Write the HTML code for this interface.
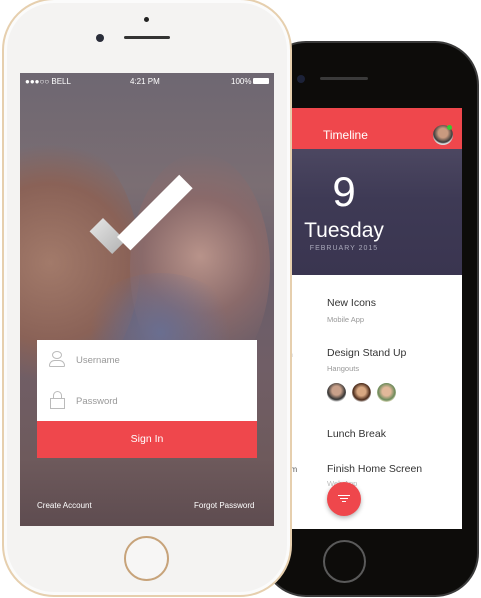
<!DOCTYPE html>
<html><head><style>
*{margin:0;padding:0;box-sizing:border-box}
body{width:481px;height:598px;background:#fff;position:relative;overflow:hidden;font-family:"Liberation Sans",sans-serif}
.abs{position:absolute}
</style></head><body>
<!-- black phone -->
<div class="abs" style="left:262px;top:41px;width:217px;height:556px;background:#0d0c0a;border-radius:44px;border:2px solid #3a3a3a"></div>
<div class="abs" style="left:297px;top:75px;width:8px;height:8px;border-radius:50%;background:#1c2238"></div>
<div class="abs" style="left:320px;top:77px;width:48px;height:3px;border-radius:2px;background:#3a3a3a"></div>
<div class="abs" style="left:323px;top:540px;width:43px;height:43px;border-radius:50%;border:2px solid #5a5a5a"></div>
<div class="abs" style="left:280px;top:108px;width:182px;height:421px;background:#fff;overflow:hidden">
  <div class="abs" style="left:0;top:0;width:182px;height:41px;background:#ef474c;color:#fff;font-size:12px">
    <span class="abs" style="left:43px;top:20px">Timeline</span>
    <div class="abs" style="left:153px;top:17px;width:20px;height:20px;border-radius:50%;background:radial-gradient(circle at 50% 40%,#c99a7f 30%,#3a3a3a 60%,#ddd 70%)"></div>
    <div class="abs" style="left:167px;top:17px;width:5px;height:5px;border-radius:50%;background:#3c3"></div>
  </div>
  <div class="abs" style="left:0;top:41px;width:182px;height:126px;background:linear-gradient(180deg,#4c4761 0%,#3e3a55 40%,#3a3550 100%);color:#fff;text-align:center">
    <div class="abs" style="left:0;width:128px;top:22px;font-size:42px;font-weight:300;line-height:42px">9</div>
    <div class="abs" style="left:0;width:128px;top:70px;font-size:21px;line-height:24px">Tuesday</div>
    <div class="abs" style="left:0;width:128px;top:96px;font-size:7px;letter-spacing:1px;color:#aaa9bb">FEBRUARY 2015</div>
  </div>
  <div class="abs" style="left:47px;top:189px;font-size:10.5px;color:#333">New Icons</div>
  <div class="abs" style="left:47px;top:207px;font-size:7.5px;color:#999">Mobile App</div>
  <div class="abs" style="left:47px;top:239px;font-size:10.5px;color:#333">Design Stand Up</div>
  <div class="abs" style="left:47px;top:256px;font-size:7.5px;color:#999">Hangouts</div>
  <div class="abs" style="left:47px;top:275px;width:19px;height:19px;border-radius:50%;background:radial-gradient(circle at 50% 40%,#c8a08a 30%,#333 60%,#eee 75%)"></div>
  <div class="abs" style="left:72px;top:275px;width:19px;height:19px;border-radius:50%;background:radial-gradient(circle at 50% 45%,#d8a882 30%,#4a2a1a 60%,#eee 75%)"></div>
  <div class="abs" style="left:97px;top:275px;width:19px;height:19px;border-radius:50%;background:radial-gradient(circle at 50% 45%,#e2b89a 30%,#6b8a5a 60%,#efe8cc 75%)"></div>
  <div class="abs" style="left:47px;top:320px;font-size:10.5px;color:#333">Lunch Break</div>
  <div class="abs" style="left:47px;top:355px;font-size:10.5px;color:#333">Finish Home Screen</div>
  <div class="abs" style="left:47px;top:371px;font-size:7.5px;color:#bbb">Web App</div>
  <div class="abs" style="left:6px;top:242px;font-size:8px;color:#555">m</div>
  <div class="abs" style="left:6px;top:357px;font-size:8px;color:#555">am</div>
  <div class="abs" style="left:47px;top:374px;width:34px;height:34px;border-radius:50%;background:#ef474c;box-shadow:0 2px 5px rgba(0,0,0,.3)">
    <div class="abs" style="left:11px;top:13px;width:12px;height:1px;background:#fff"></div>
    <div class="abs" style="left:13px;top:16px;width:8px;height:1px;background:#fff"></div>
    <div class="abs" style="left:15px;top:19px;width:4px;height:1px;background:#fff"></div>
  </div>
</div>
<!-- white phone -->
<div class="abs" style="left:2px;top:-2px;width:290px;height:599px;background:#f4f3f2;border-radius:52px;border:2px solid #e6cfae;box-shadow:inset 0 0 0 3px #fbfbfb"></div>
<div class="abs" style="left:144px;top:17px;width:5px;height:5px;border-radius:50%;background:#222"></div>
<div class="abs" style="left:96px;top:34px;width:8px;height:8px;border-radius:50%;background:#2a2d3a"></div>
<div class="abs" style="left:124px;top:36px;width:46px;height:3px;border-radius:2px;background:#333"></div>
<div class="abs" style="left:124px;top:536px;width:45px;height:45px;border-radius:50%;border:2px solid #c7a37a;background:#f7f6f5"></div>
<div class="abs" style="left:20px;top:73px;width:254px;height:453px;overflow:hidden;background:linear-gradient(180deg,#6e6772 0%,#7b6e73 25%,#6a5e6a 45%,#705e66 65%,#6e5a5c 85%,#5e4c50 100%)">
  <div class="abs" style="left:-60px;top:60px;width:180px;height:260px;border-radius:50%;background:radial-gradient(circle,#a27a6a 0%,#8a6257 50%,rgba(120,90,85,0) 75%)"></div>
  <div class="abs" style="left:110px;top:80px;width:140px;height:230px;border-radius:50%;background:radial-gradient(circle at 50% 45%,#b8938a 0%,#8a6a6a 40%,rgba(90,70,80,0) 72%)"></div>
  <div class="abs" style="left:60px;top:200px;width:160px;height:120px;border-radius:50%;background:radial-gradient(circle,#6a6e90 0%,rgba(90,90,120,0) 70%)"></div>
  <div class="abs" style="left:0;top:0;width:254px;height:14px;color:#fff;font-size:8px">
    <span class="abs" style="left:5px;top:4px">●●●○○ BELL</span>
    <span class="abs" style="left:110px;top:4px">4:21 PM</span>
    <span class="abs" style="left:211px;top:4px">100%</span>
    <div class="abs" style="left:233px;top:5px;width:16px;height:6px;background:#fff;border-radius:1px"></div>
  </div>
  <div class="abs" style="left:83px;top:145px;width:32px;height:19px;background:linear-gradient(90deg,#ddd,#bbb);transform:rotate(45deg);transform-origin:0 0"></div>
  <div class="abs" style="left:97px;top:164px;width:88px;height:19px;background:#fff;transform:rotate(-45deg);transform-origin:0 0"></div>
  <div class="abs" style="left:17px;top:267px;width:220px;height:81px;background:#fff">
    <div class="abs" style="left:15px;top:11px;width:10px;height:8px;border:1.3px solid #bbb;border-radius:50%"></div>
    <div class="abs" style="left:12px;top:20px;width:16px;height:7px;border:1.3px solid #bbb;border-radius:8px 8px 2px 2px"></div>
    <span class="abs" style="left:39px;top:15px;font-size:9.5px;color:#999">Username</span>
    <div class="abs" style="left:16px;top:51px;width:9px;height:8px;border:1.3px solid #bbb;border-bottom:none;border-radius:5px 5px 0 0"></div>
    <div class="abs" style="left:13px;top:58px;width:15px;height:11px;border:1.3px solid #bbb"></div>
    <span class="abs" style="left:39px;top:56px;font-size:9.5px;color:#999">Password</span>
  </div>
  <div class="abs" style="left:17px;top:348px;width:220px;height:37px;background:#ef474c;color:#fff;font-size:10.5px;text-align:center;line-height:37px">Sign In</div>
  <span class="abs" style="left:17px;top:428px;font-size:8px;color:#fff">Create Account</span>
  <span class="abs" style="left:174px;top:428px;font-size:8px;color:#fff">Forgot Password</span>
</div>
</body></html>
